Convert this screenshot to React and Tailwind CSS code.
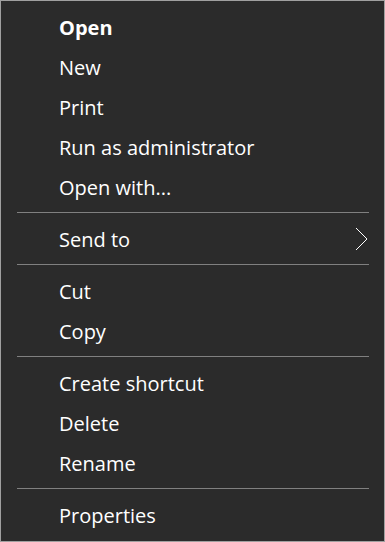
const groups = [
  ["Open", "New", "Print", "Run as administrator", "Open with..."],
  ["Send to"],
  ["Cut", "Copy"],
  ["Create shortcut", "Delete", "Rename"],
  ["Properties"],
];

function MenuItem({ label }) {
  const bold = label === "Open";
  const sub = label === "Send to";
  return (
    <div className="h-10 flex items-center pl-[58px] pr-[16px]">
      <span className={"flex-1 text-[20px] leading-none pt-[2px] " + (bold ? "font-bold" : "font-normal")}>
        {label}
      </span>
      {sub && (
        <svg width="13" height="24" viewBox="0 0 13 24" className="block">
          <polyline
            points="1,1 12,12 1,23"
            fill="none"
            stroke="#ffffff"
            strokeWidth="1"
          />
        </svg>
      )}
    </div>
  );
}

export default function App() {
  return (
    <div
      className="w-[385px] h-[542px] bg-[#2b2b2b] border border-[#a0a0a0] py-[6px] text-white"
      style={{ fontFamily: '"Open Sans", "Noto Sans", sans-serif' }}
    >
      {groups.map((items, i) => (
        <div key={i}>
          {i > 0 && <div className="h-px bg-[#808080] mt-[5px] mb-[6px] ml-[16px] mr-[15px]" />}
          {items.map((label) => (
            <MenuItem key={label} label={label} />
          ))}
        </div>
      ))}
    </div>
  );
}
